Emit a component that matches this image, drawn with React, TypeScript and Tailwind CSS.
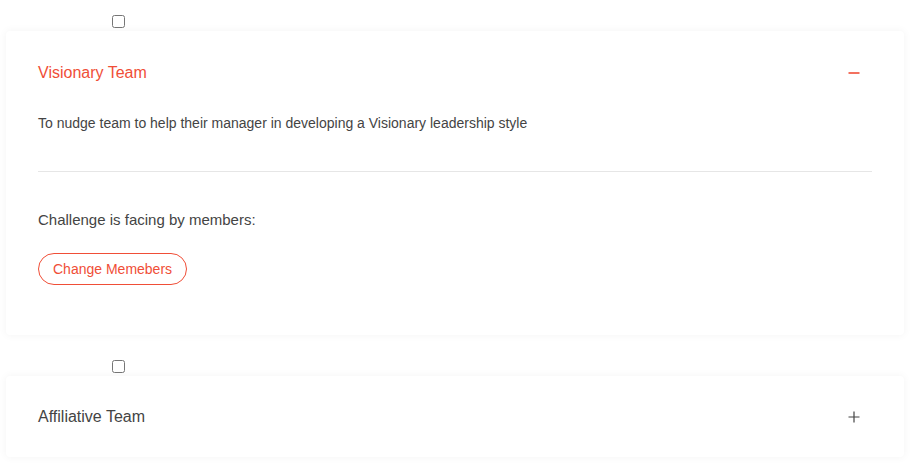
import React from "react";

const red = "text-[#f04e37]";

function MinusIcon() {
  return (
    <svg width="12" height="12" viewBox="0 0 12 12" className="block">
      <path d="M0.5 6H11.5" stroke="#f04e37" strokeWidth="1.6" />
    </svg>
  );
}

function PlusIcon() {
  return (
    <svg width="12" height="12" viewBox="0 0 12 12" className="block">
      <path d="M0.5 6H11.5M6 0.5V11.5" stroke="#444" strokeWidth="1.2" />
    </svg>
  );
}

export default function App() {
  return (
    <div className="min-h-[473px] bg-white px-[6px] font-['Liberation_Sans',Arial,sans-serif] text-[#444]">
      {/* first item, expanded */}
      <div className="pl-[106px] pt-[15px]">
        <input type="checkbox" className="m-0 block h-[13px] w-[13px]" />
      </div>
      <div className="mt-[3px] w-[898px] rounded-[4px] bg-white shadow-[0_0_8px_rgba(0,0,0,0.05)]">
        <div className="flex items-center justify-between pl-[32px] pr-[44px] pt-[30px]">
          <h3 className={`text-base leading-6 ${red}`}>Visionary Team</h3>
          <MinusIcon />
        </div>
        <div className="px-[32px] pb-[50px]">
          <p className="mt-[28px] text-sm leading-5">
            To nudge team to help their manager in developing a Visionary leadership style
          </p>
          <div className="mt-[38px] h-px bg-[#e6e6e6]" />
          <p className="mt-[37px] text-[15px] leading-[22px]">Challenge is facing by members:</p>
          <button
            className={`mt-[22px] h-[32px] rounded-full border border-[#f04e37] px-[14px] text-sm ${red}`}
          >
            Change Memebers
          </button>
        </div>
      </div>

      {/* second item, collapsed */}
      <div className="pl-[106px] pt-[25px]">
        <input type="checkbox" className="m-0 block h-[13px] w-[13px]" />
      </div>
      <div className="mt-[3px] w-[898px] rounded-[4px] bg-white shadow-[0_0_8px_rgba(0,0,0,0.05)]">
        <div className="flex items-center justify-between pb-[28px] pl-[32px] pr-[44px] pt-[29px]">
          <h3 className="text-base leading-6 text-[#444]">Affiliative Team</h3>
          <PlusIcon />
        </div>
      </div>
    </div>
  );
}
